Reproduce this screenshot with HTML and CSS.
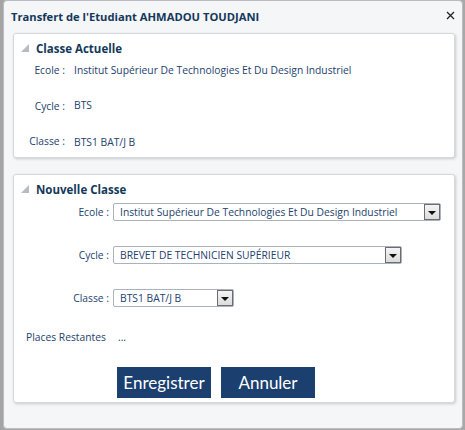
FILE: index.html
```html
<!DOCTYPE html>
<html>
<head>
<meta charset="utf-8">
<link rel="stylesheet" href="styles.css">
</head>
<body>
<div class="page">
  <div class="backdrop"></div>
  <div class="dialog">
    <div class="titlebar">
      <span class="title">Transfert de l'Etudiant AHMADOU TOUDJANI</span>
      <svg class="close" width="9" height="9" viewBox="0 0 9 9"><path d="M1 1L8 8M8 1L1 8" stroke="#222" stroke-width="1.3"/></svg>
    </div>
    <div class="panel panel-current">
      <div class="panel-head"><span class="tri"></span>Classe Actuelle</div>
      <div class="info-grid">
        <span class="lbl">Ecole :</span><span class="val">Institut Supérieur De Technologies Et Du Design Industriel</span>
        <span class="lbl">Cycle :</span><span class="val">BTS</span>
        <span class="lbl">Classe :</span><span class="val">BTS1 BAT/J B</span>
      </div>
    </div>
    <div class="panel panel-new">
      <div class="panel-head"><span class="tri"></span>Nouvelle Classe</div>
      <div class="form-grid">
        <span class="lbl">Ecole :</span>
        <div class="select sel-ecole"><span class="sel-text">Institut Supérieur De Technologies Et Du Design Industriel</span><span class="sel-btn"><span class="arrow"></span></span></div>
        <span class="lbl">Cycle :</span>
        <div class="select sel-cycle"><span class="sel-text">BREVET DE TECHNICIEN SUPÉRIEUR</span><span class="sel-btn"><span class="arrow"></span></span></div>
        <span class="lbl">Classe :</span>
        <div class="select sel-classe"><span class="sel-text">BTS1 BAT/J B</span><span class="sel-btn"><span class="arrow"></span></span></div>
      </div>
      <div class="places"><span class="places-lbl">Places Restantes</span><span class="places-val">...</span></div>
      <div class="actions">
        <button class="btn">Enregistrer</button>
        <button class="btn">Annuler</button>
      </div>
    </div>
  </div>
</div>
</body>
</html>
```
FILE: styles.css
```css
html, body {
  margin: 0;
  padding: 0;
}
body {
  background: #a8a8a8;
  font-family: "Open Sans", "Liberation Sans", sans-serif;
  width: 465px;
  height: 430px;
  overflow: hidden;
}
.page {
  display: flex;
  height: 430px;
}
.backdrop {
  width: 3px;
  flex: none;
  background: #a4a4a4;
}
.dialog {
  width: 458px;
  height: 427px;
  background: #f5f6f7;
  border: 1px solid #b9bcc0;
  border-radius: 4px;
  box-sizing: content-box;
  display: flex;
  flex-direction: column;
}
.titlebar {
  height: 32px;
  display: flex;
  align-items: center;
  justify-content: space-between;
  padding: 0 8px 0 7px;
  box-sizing: border-box;
}
.title {
  font-weight: bold;
  font-size: 11.2px;
  color: #14385a;
  margin-top: -2px;
}
.close {
  margin-top: -4px;
  margin-right: -1px;
}
.panel {
  margin: 0 7px 0 9px;
  background: #fff;
  border: 1px solid #d6d9dc;
  border-radius: 3px;
  box-shadow: 1px 1px 3px rgba(0,0,0,0.18);
}
.panel-current {
  height: 125px;
  box-sizing: border-box;
}
.panel-new {
  margin-top: 16px;
  height: 229px;
  box-sizing: border-box;
}
.panel-head {
  display: flex;
  align-items: center;
  font-weight: bold;
  font-size: 11.5px;
  color: #14385a;
  padding: 7px 0 0 7px;
  height: 14px;
}
.tri {
  width: 0;
  height: 0;
  border-left: 8px solid transparent;
  border-bottom: 8px solid #b5bcc4;
  margin-right: 7px;
}
.info-grid {
  display: grid;
  grid-template-columns: 51px auto;
  column-gap: 9px;
  row-gap: 21px;
  font-size: 10.3px;
  color: #24426e;
  padding: 8px 0 0 0;
  line-height: 14px;
}
.info-grid .lbl {
  text-align: right;
}
.info-grid .lbl:nth-of-type(3),
.info-grid .val:nth-of-type(6) {
  margin-top: 1px;
}
.form-grid {
  display: grid;
  grid-template-columns: 95px auto;
  column-gap: 4px;
  row-gap: 25px;
  align-items: center;
  font-size: 10.3px;
  color: #24426e;
  padding-top: 7px;
}
.form-grid .lbl {
  text-align: right;
}
.select {
  height: 18px;
  box-sizing: border-box;
  border: 1px solid #a9b3bf;
  border-radius: 2px;
  display: flex;
  align-items: center;
  justify-content: space-between;
  background: #fff;
  justify-self: start;
}
.sel-text {
  padding-left: 6px;
  white-space: nowrap;
}
.sel-ecole { width: 328px; }
.sel-cycle { width: 289px; }
.sel-classe { width: 121px; }
.sel-btn {
  width: 16px;
  height: 16px;
  box-sizing: border-box;
  border: 1px solid #6d6d6d;
  background: linear-gradient(#f4f4f4, #dcdcdc);
  display: flex;
  align-items: center;
  justify-content: center;
}
.arrow {
  width: 0;
  height: 0;
  border-left: 4px solid transparent;
  border-right: 4px solid transparent;
  border-top: 4px solid #111;
  margin-top: 1px;
}
.places {
  display: flex;
  font-size: 10.3px;
  color: #24426e;
  padding: 23px 0 0 12px;
}
.places-val {
  margin-left: 12px;
}
.actions {
  display: flex;
  gap: 10px;
  padding: 23px 0 0 103px;
}
.btn {
  width: 94px;
  height: 31px;
  border: none;
  background: #1b3f6e;
  color: #fff;
  font-family: "Lato", "Open Sans", sans-serif;
  font-size: 17px;
  padding: 0;
  cursor: pointer;
}
```
